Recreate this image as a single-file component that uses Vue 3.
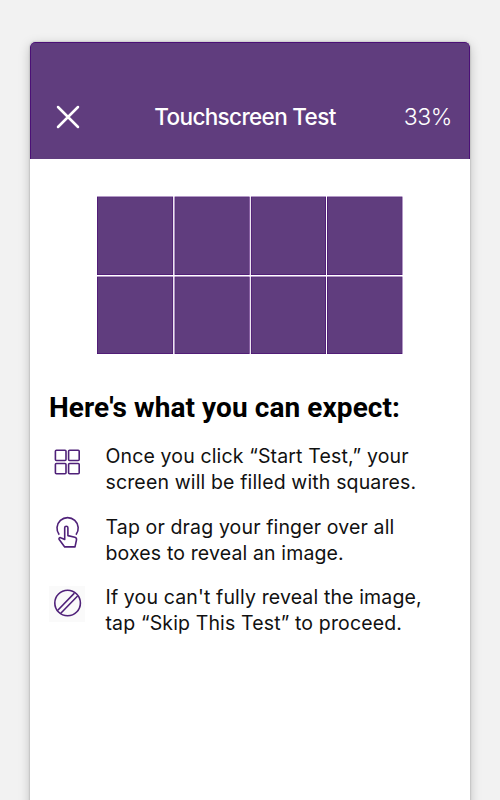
<template>
    <div class="page">
        <div class="phone">
            <header class="top-bar">
                <svg class="close" viewBox="0 0 24 24">
                    <path d="M2 2L22 22M22 2L2 22" />
                </svg>
                <h1>Touchscreen Test</h1>
                <span class="progress">33%</span>
            </header>
            <main>
                <svg class="board" viewBox="0 0 306 158">
                    <g v-for="row in rows" :key="row.y">
                        <g v-for="col in cols" :key="col.x">
                            <rect class="edge" :x="col.x" :y="row.y" :width="col.width" :height="row.height" />
                            <rect class="fill" :x="col.x + 0.5" :y="row.y + 0.5" :width="col.width - 1" :height="row.height - 1" />
                        </g>
                    </g>
                </svg>
                <h2>Here's what you can expect:</h2>
                <ul>
                    <li v-for="step in steps" :key="step.icon">
                        <span class="icon" :class="step.icon">
                            <svg v-if="step.icon === 'squares'" viewBox="0 0 36 36">
                                <rect x="6.4" y="5.2" width="10.6" height="10.3" rx="1" />
                                <rect x="19.6" y="5.2" width="10.6" height="10.3" rx="1" />
                                <rect x="6.4" y="18.5" width="10.6" height="10.3" rx="1" />
                                <rect x="19.6" y="18.5" width="10.6" height="10.3" rx="1" />
                            </svg>
                            <svg v-else-if="step.icon === 'touch'" viewBox="0 0 36 36">
                                <path d="M10.2 18.7A10.6 10.6 0 1 1 27 18.7" />
                                <path d="M15.7 23.4V11.8a1.6 1.6 0 0 1 3.2 0v7.8l6.9 1.7c1.3.4 1.9 1.2 1.7 2.5l-1.5 7.1H15.7l-5.5-7.4c-.8-1.3.4-2.2 1.5-1.7z" />
                            </svg>
                            <svg v-else viewBox="0 0 36 36">
                                <circle cx="18.6" cy="17" r="12.8" />
                                <path d="M8.8 24.2L25.4 7.1M11.8 27.2L28.6 10" />
                            </svg>
                        </span>
                        <p>
                            <span v-for="line in step.lines" :key="line">{{ line }}</span>
                        </p>
                    </li>
                </ul>
            </main>
        </div>
    </div>
</template>

<script setup>
// columns and rows of the board squares
const cols = [
    { x: 0, width: 76.1 },
    { x: 77.6, width: 75 },
    { x: 153.9, width: 75.1 },
    { x: 230, width: 75.4 }
]
const rows = [
    { y: 0.6, height: 78.4 },
    { y: 80.6, height: 77.4 }
]

const steps = [
    {
        icon: 'squares',
        lines: ['Once you click “Start Test,” your', 'screen will be filled with squares.']
    },
    {
        icon: 'touch',
        lines: ['Tap or drag your finger over all', 'boxes to reveal an image.']
    },
    {
        icon: 'skip',
        lines: ["If you can't fully reveal the image,", 'tap “Skip This Test” to proceed.']
    }
]
</script>

<style>
body {
    background: #f2f2f2;
}
</style>

<style scoped>
.page {
    box-sizing: border-box;
    height: 800px;
    padding: 42px 30px 0;
    overflow: hidden;
    background: #f2f2f2;
    font-family: Inter, "Liberation Sans", sans-serif;
}

.phone {
    height: 800px;
    border-radius: 5px 5px 0 0;
    background: #fff;
    box-shadow: 0 0 2px rgba(0, 0, 0, 0.3), 0 3px 12px rgba(0, 0, 0, 0.22);
    overflow: hidden;
}

.top-bar {
    box-sizing: border-box;
    display: grid;
    grid-template-columns: 90px 1fr 90px;
    align-items: center;
    height: 117px;
    padding: 32px 17px 0 25px;
    border: 1px solid #4b1076;
    border-bottom: 0;
    border-radius: 5px 5px 0 0;
    background: #603d7e;
    color: #fff;
}

.close {
    width: 24px;
    height: 24px;
    fill: none;
    stroke: #fff;
    stroke-width: 2.5;
    stroke-linecap: round;
}

h1 {
    margin: 0 18px 2px 0;
    text-align: center;
    font-size: 22.5px;
    font-weight: 450;
    letter-spacing: -0.66px;
    white-space: nowrap;
}

.progress {
    text-align: right;
    font-size: 23px;
    font-weight: 300;
    letter-spacing: -0.4px;
}

main {
    padding: 37px 19px 0;
}

.board {
    display: block;
    width: 306px;
    height: 158px;
    margin-left: 48px;
}

.edge {
    fill: #430070;
}

.fill {
    fill: #603d7e;
}

h2 {
    margin: 38px 0 0;
    color: #000;
    font-family: Roboto, sans-serif;
    font-size: 28px;
    font-weight: 700;
    line-height: 32px;
    letter-spacing: 0.08px;
    white-space: nowrap;
}

ul {
    margin: 19px 0 0;
    padding: 0;
    list-style: none;
}

li {
    display: flex;
    height: 52px;
    margin-bottom: 18.5px;
}

.icon {
    width: 36px;
    height: 36px;
    margin: 2px 20.5px 0 0;
}

.icon svg {
    display: block;
    width: 36px;
    height: 36px;
    fill: none;
    stroke: #4f2179;
    stroke-width: 1.6;
    stroke-linejoin: round;
}

.icon.skip {
    background: #fafafa;
}

p {
    margin: 0;
    color: #111;
    font-size: 19.5px;
    font-weight: 380;
    line-height: 26px;
    letter-spacing: 0.14px;
    white-space: nowrap;
}

p span {
    display: block;
}
</style>
